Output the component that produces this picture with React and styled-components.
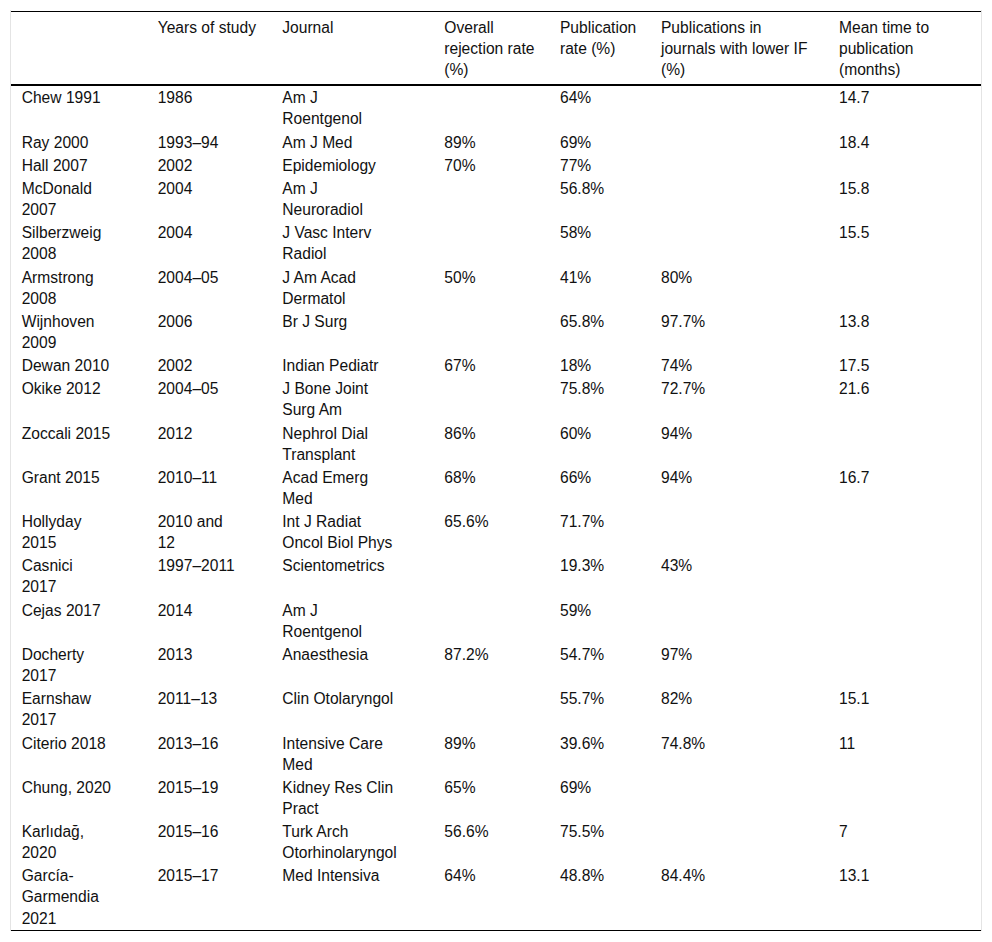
import React from "react";
import styled, { createGlobalStyle } from "styled-components";

const GlobalStyle = createGlobalStyle`
  html, body { margin: 0; padding: 0; background: #fff; }
  body {
    font-family: "Liberation Sans", Arial, sans-serif;
    color: #111;
  }
`;

const Frame = styled.div`
  margin: 10px 10px 0 10px;
  padding-top: 1px;
  border-left: 1px solid #e4e4e4;
  border-right: 1px solid #e4e4e4;
`;

const Table = styled.table`
  width: 100%;
  table-layout: fixed;
  border-collapse: collapse;
  font-size: 15.6px;
  line-height: 21.1px;
  border-top: 1px solid #000;
  border-bottom: 1px solid #000;
`;

const Col = styled.col`
  width: ${(p) => p.$w}px;
`;

const Head = styled.thead`
  border-bottom: 2px solid #000;
`;

const HeadCell = styled.th`
  text-align: left;
  font-weight: normal;
  vertical-align: top;
  white-space: pre-line;
  padding: 5px 4px 4px 10.7px;
`;

const Cell = styled.td`
  vertical-align: top;
  white-space: pre-line;
  padding: 1px 4px 1.1px 10.7px;
`;

const widths = [136, 124.6, 162, 115.7, 101, 178, 152.7];

const headers = [
  "",
  "Years of study",
  "Journal",
  "Overall\nrejection rate\n(%)",
  "Publication\nrate (%)",
  "Publications in\njournals with lower IF\n(%)",
  "Mean time to\npublication\n(months)",
];

const rows = [
  ["Chew 1991", "1986", "Am J\nRoentgenol", "", "64%", "", "14.7"],
  ["Ray 2000", "1993–94", "Am J Med", "89%", "69%", "", "18.4"],
  ["Hall 2007", "2002", "Epidemiology", "70%", "77%", "", ""],
  ["McDonald\n2007", "2004", "Am J\nNeuroradiol", "", "56.8%", "", "15.8"],
  ["Silberzweig\n2008", "2004", "J Vasc Interv\nRadiol", "", "58%", "", "15.5"],
  ["Armstrong\n2008", "2004–05", "J Am Acad\nDermatol", "50%", "41%", "80%", ""],
  ["Wijnhoven\n2009", "2006", "Br J Surg", "", "65.8%", "97.7%", "13.8"],
  ["Dewan 2010", "2002", "Indian Pediatr", "67%", "18%", "74%", "17.5"],
  ["Okike 2012", "2004–05", "J Bone Joint\nSurg Am", "", "75.8%", "72.7%", "21.6"],
  ["Zoccali 2015", "2012", "Nephrol Dial\nTransplant", "86%", "60%", "94%", ""],
  ["Grant 2015", "2010–11", "Acad Emerg\nMed", "68%", "66%", "94%", "16.7"],
  ["Hollyday\n2015", "2010 and\n12", "Int J Radiat\nOncol Biol Phys", "65.6%", "71.7%", "", ""],
  ["Casnici\n2017", "1997–2011", "Scientometrics", "", "19.3%", "43%", ""],
  ["Cejas 2017", "2014", "Am J\nRoentgenol", "", "59%", "", ""],
  ["Docherty\n2017", "2013", "Anaesthesia", "87.2%", "54.7%", "97%", ""],
  ["Earnshaw\n2017", "2011–13", "Clin Otolaryngol", "", "55.7%", "82%", "15.1"],
  ["Citerio 2018", "2013–16", "Intensive Care\nMed", "89%", "39.6%", "74.8%", "11"],
  ["Chung, 2020", "2015–19", "Kidney Res Clin\nPract", "65%", "69%", "", ""],
  ["Karlıdağ,\n2020", "2015–16", "Turk Arch\nOtorhinolaryngol", "56.6%", "75.5%", "", "7"],
  ["García-\nGarmendia\n2021", "2015–17", "Med Intensiva", "64%", "48.8%", "84.4%", "13.1"],
];

export default function App() {
  return (
    <>
      <GlobalStyle />
      <Frame>
        <Table>
          <colgroup>
            {widths.map((w, i) => (
              <Col key={i} $w={w} />
            ))}
          </colgroup>
          <Head>
            <tr>
              {headers.map((h, i) => (
                <HeadCell key={i}>{h}</HeadCell>
              ))}
            </tr>
          </Head>
          <tbody>
            {rows.map((r, i) => (
              <tr key={i}>
                {r.map((c, j) => (
                  <Cell key={j}>{c}</Cell>
                ))}
              </tr>
            ))}
          </tbody>
        </Table>
      </Frame>
    </>
  );
}
